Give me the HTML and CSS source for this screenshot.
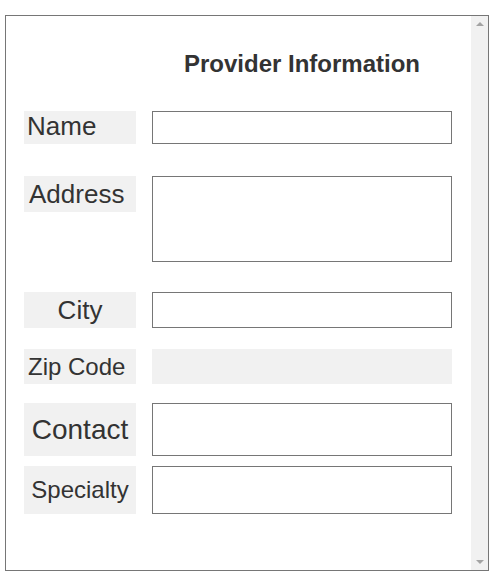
FILE: index.html
```html
<!DOCTYPE html>
<html lang="en">
<head>
<meta charset="utf-8">
<title>Provider Information</title>
<link rel="stylesheet" href="styles.css">
</head>
<body>
<div class="frame">
  <div class="content">
    <div class="row row-title">
      <div class="spacer"></div>
      <h1 class="title">Provider Information</h1>
    </div>
    <div class="row row-name">
      <label class="label label-name">Name</label>
      <input class="field" type="text">
    </div>
    <div class="row row-address">
      <label class="label label-address">Address</label>
      <textarea class="field area"></textarea>
    </div>
    <div class="row row-city">
      <label class="label label-city">City</label>
      <input class="field" type="text">
    </div>
    <div class="row row-zip">
      <label class="label label-zip">Zip Code</label>
      <div class="field field-flat"></div>
    </div>
    <div class="row row-contact">
      <label class="label label-contact">Contact</label>
      <input class="field" type="text">
    </div>
    <div class="row row-specialty">
      <label class="label label-specialty">Specialty</label>
      <input class="field" type="text">
    </div>
  </div>
  <div class="scrollbar">
    <span class="arrow arrow-up"></span>
    <span class="arrow arrow-down"></span>
  </div>
</div>
</body>
</html>
```
FILE: styles.css
```css
* { box-sizing: border-box; }

html, body {
  margin: 0;
  padding: 0;
  background: #ffffff;
}

body {
  padding: 15px 0 0 5px;
  font-family: "Liberation Sans", Arial, sans-serif;
  color: #333333;
}

.frame {
  width: 484px;
  height: 556px;
  border: 1px solid #767676;
  display: flex;
  background: #ffffff;
}

.content {
  flex: 1;
  padding: 0 0 0 18px;
  display: flex;
  flex-direction: column;
  overflow: hidden;
}

.row {
  display: flex;
  flex: none;
}

.spacer {
  width: 112px;
  flex: none;
}

.title {
  margin: 0 0 0 16px;
  width: 300px;
  font-size: 24px;
  line-height: 28px;
  font-weight: bold;
  text-align: center;
  color: #333333;
}

.label {
  width: 112px;
  flex: none;
  background: #f1f1f1;
  color: #333333;
  display: flex;
  line-height: 30px;
}

.field {
  width: 300px;
  margin: 0 0 0 16px;
  border: 1px solid #767676;
  background: #ffffff;
  padding: 0;
  font: inherit;
  outline: none;
  resize: none;
  display: block;
}

.field-flat {
  border: none;
  background: #f1f1f1;
}

.row-title { margin-top: 34px; height: 28px; }

.row-name { margin-top: 33px; height: 33px; }
.label-name { font-size: 26px; padding-left: 3px; align-items: flex-start; }

.row-address { margin-top: 32px; height: 86px; align-items: flex-start; }
.label-address { font-size: 26px; padding: 3px 0 0 5px; height: 36px; }
.area { height: 86px; }

.row-city { margin-top: 30px; height: 36px; }
.label-city { font-size: 26px; justify-content: center; align-items: center; }

.row-zip { margin-top: 21px; height: 35px; }
.label-zip { font-size: 24px; padding-left: 4px; align-items: center; line-height: 28px; }

.row-contact { margin-top: 19px; height: 53px; }
.label-contact { font-size: 28px; justify-content: center; align-items: center; line-height: 32px; }

.row-specialty { margin-top: 10px; height: 48px; }
.label-specialty { font-size: 24px; justify-content: center; align-items: center; line-height: 28px; }

.scrollbar {
  width: 17px;
  flex: none;
  background: #f1f1f1;
  display: flex;
  flex-direction: column;
  justify-content: space-between;
  align-items: center;
  padding: 6px 0 6px;
}

.arrow {
  width: 0;
  height: 0;
  border-left: 4px solid transparent;
  border-right: 4px solid transparent;
}

.arrow-up {
  border-bottom: 4px solid #a3a3a3;
}

.arrow-down {
  border-top: 4px solid #a3a3a3;
}
```
